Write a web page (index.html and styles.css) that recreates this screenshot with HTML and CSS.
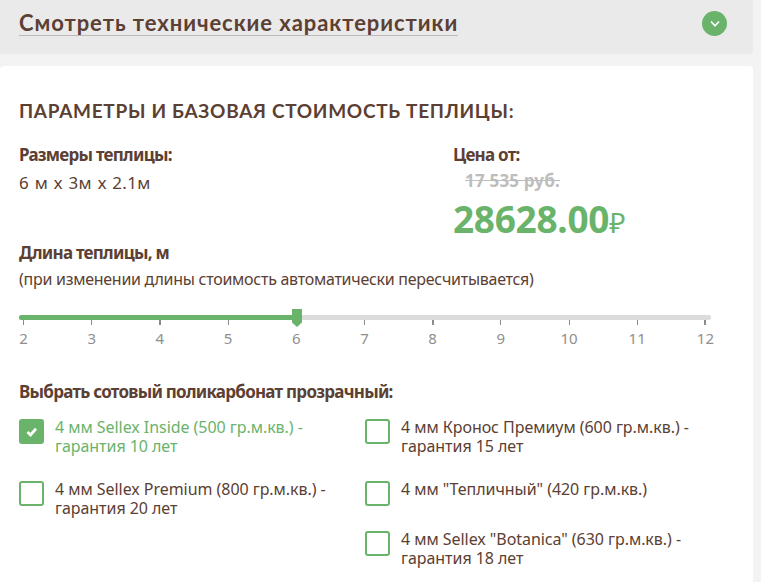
FILE: index.html
```html
<!DOCTYPE html>
<html lang="ru">
<head>
<meta charset="utf-8">
<title>Параметры теплицы</title>
<link rel="stylesheet" href="styles.css">
</head>
<body>
<div class="page">
  <section class="specs">
    <a class="specs-link">Смотреть технические характеристики</a>
    <span class="specs-toggle">
      <svg width="12" height="10" viewBox="0 0 12 10"><path d="M2 2.500 6 6.800 10 2.500" fill="none" stroke="#fff" stroke-width="1.700"/></svg>
    </span>
  </section>
  <main class="card">
    <h2 class="title">ПАРАМЕТРЫ И БАЗОВАЯ СТОИМОСТЬ ТЕПЛИЦЫ:</h2>
    <div class="info">
      <div class="size">
        <div class="label">Размеры теплицы:</div>
        <div class="size-value">6 м х 3м х 2.1м</div>
      </div>
      <div class="price">
        <div class="label">Цена от:</div>
        <div class="old-price">17 535 руб.</div>
        <div class="new-price">28628.00<span class="currency">₽</span></div>
      </div>
    </div>
    <div class="label length-label">Длина теплицы, м</div>
    <div class="hint">(при изменении длины стоимость автоматически пересчитывается)</div>
    <div class="slider">
      <div class="track"><div class="fill"></div></div>
      <div class="thumb">
        <svg width="10" height="18" viewBox="0 0 10 18"><path d="M0 0H10V13.500L5 18 0 13.500Z" fill="#69b36b"/></svg>
      </div>
      <div class="scale">
        <div class="tick"><i></i><span>2</span></div>
        <div class="tick"><i></i><span>3</span></div>
        <div class="tick"><i></i><span>4</span></div>
        <div class="tick"><i></i><span>5</span></div>
        <div class="tick"><i></i><span>6</span></div>
        <div class="tick"><i></i><span>7</span></div>
        <div class="tick"><i></i><span>8</span></div>
        <div class="tick"><i></i><span>9</span></div>
        <div class="tick"><i></i><span>10</span></div>
        <div class="tick"><i></i><span>11</span></div>
        <div class="tick"><i></i><span>12</span></div>
      </div>
    </div>
    <div class="label options-label">Выбрать сотовый поликарбонат прозрачный:</div>
    <div class="options">
      <div class="col">
        <div class="option checked">
          <span class="box"><svg width="14" height="12" viewBox="0 0 14 12"><path d="M2.500 6 5.500 9 11 2.800" fill="none" stroke="#fff" stroke-width="2.800"/></svg></span>
          <span class="option-text">4 мм Sellex Inside (500 гр.м.кв.) - гарантия 10 лет</span>
        </div>
        <div class="option">
          <span class="box"></span>
          <span class="option-text">4 мм Sellex Premium (800 гр.м.кв.) - гарантия 20 лет</span>
        </div>
      </div>
      <div class="col">
        <div class="option">
          <span class="box"></span>
          <span class="option-text">4 мм Кронос Премиум (600 гр.м.кв.) - гарантия 15 лет</span>
        </div>
        <div class="option single">
          <span class="box"></span>
          <span class="option-text">4 мм "Тепличный" (420 гр.м.кв.)</span>
        </div>
        <div class="option">
          <span class="box"></span>
          <span class="option-text">4 мм Sellex "Botanica" (630 гр.м.кв.) - гарантия 18 лет</span>
        </div>
      </div>
    </div>
  </main>
</div>
</body>
</html>
```

FILE: styles.css
```css
* { box-sizing: border-box; }
html, body { margin: 0; height: 100%; overflow: hidden; }
body {
  background: #f3f3f3;
  color: #5b4033;
  font-family: "Noto Sans", "Open Sans", sans-serif;
}
.page { width: 753px; }
.specs {
  height: 54px;
  background: #eaeaea;
  border-radius: 0 0 4px 0;
  padding: 11px 26px 0 19px;
  display: flex;
  justify-content: space-between;
  align-items: flex-start;
}
.specs-link {
  font-family: "Lato", sans-serif;
  font-weight: 700;
  font-size: 22px;
  line-height: 24px;
  height: 25px;
  letter-spacing: 0.94px;
  border-bottom: 1px solid #bdb9b6;
}
.specs-toggle {
  width: 25px;
  height: 25px;
  border-radius: 50%;
  background: #69b36b;
  display: flex;
  align-items: center;
  justify-content: center;
}
.card {
  margin-top: 12px;
  height: 520px;
  background: #fff;
  border-radius: 4px 4px 0 0;
  padding: 34px 19px 0;
}
.title {
  margin: 0;
  font-family: "Lato", sans-serif;
  font-weight: 700;
  font-size: 19px;
  line-height: 22px;
  letter-spacing: 0.7px;
}
.info { display: flex; margin-top: 23px; height: 98px; }
.size { width: 434px; }
.label {
  font-family: "Noto Sans", sans-serif;
  font-weight: 700;
  font-size: 17px;
  line-height: 20px;
  letter-spacing: -0.75px;
}
.size-value { font-size: 17px; line-height: 20px; margin-top: 8px; letter-spacing: 0.3px; word-spacing: 1px; }
.old-price {
  margin-top: 7px;
  margin-left: 12px;
  font-weight: 700;
  font-size: 17px;
  line-height: 18px;
  color: #bdbdbd;
  text-decoration: line-through;
  letter-spacing: 0.2px;
}
.new-price {
  margin-top: 7px;
  font-family: "Noto Sans", sans-serif;
  font-weight: 700;
  font-size: 37px;
  line-height: 44px;
  color: #69b36b;
  letter-spacing: -0.3px;
}
.currency { font-size: 28px; font-weight: 400; letter-spacing: 0; }
.hint { font-size: 16px; line-height: 20px; margin-top: 6px; letter-spacing: -0.27px; }
.slider { position: relative; margin-top: 26px; height: 50px; width: 692px; }
.track { position: relative; z-index: 1; height: 5px; border-radius: 3px; }
.track::before { content: ""; position: absolute; inset: 0; border-radius: 3px; background: #dcdcdc; z-index: -2; }
.fill { width: 278px; height: 5px; border-radius: 3px; background: #69b36b; position: relative; }
.thumb { position: absolute; z-index: 2; left: 273px; top: -6px; line-height: 0; }
.scale {
  display: flex;
  justify-content: space-between;
  padding: 0 5px 0 4px;
  margin-top: -5px;
  position: relative;
}
.tick { width: 1px; display: flex; flex-direction: column; align-items: center; }
.tick i { display: block; width: 1px; height: 10px; background: #8a8a8a; flex: none; }
.tick:nth-child(4n+3) i { width: 2px; }
.tick span { font-size: 15px; line-height: 18px; margin-top: 4px; color: #8f8f8f; }
.options-label { margin-top: 17px; }
.options { display: flex; margin-top: 17px; }
.col { width: 346px; }
.col:last-child { width: 340px; }
.option { display: flex; gap: 11px; height: 62px; }
.col:last-child .option.single { height: 50px; }
.box {
  flex: none;
  width: 25px;
  height: 25px;
  border: 2px solid #69b36b;
  border-radius: 3px;
  background: #fff;
  display: flex;
  align-items: center;
  justify-content: center;
}
.checked .box { background: #69b36b; }
.checked .option-text { color: #69b36b; }
.option-text { font-size: 16px; line-height: 19px; margin-top: -1px; max-width: 295px; letter-spacing: -0.05px; }
```
